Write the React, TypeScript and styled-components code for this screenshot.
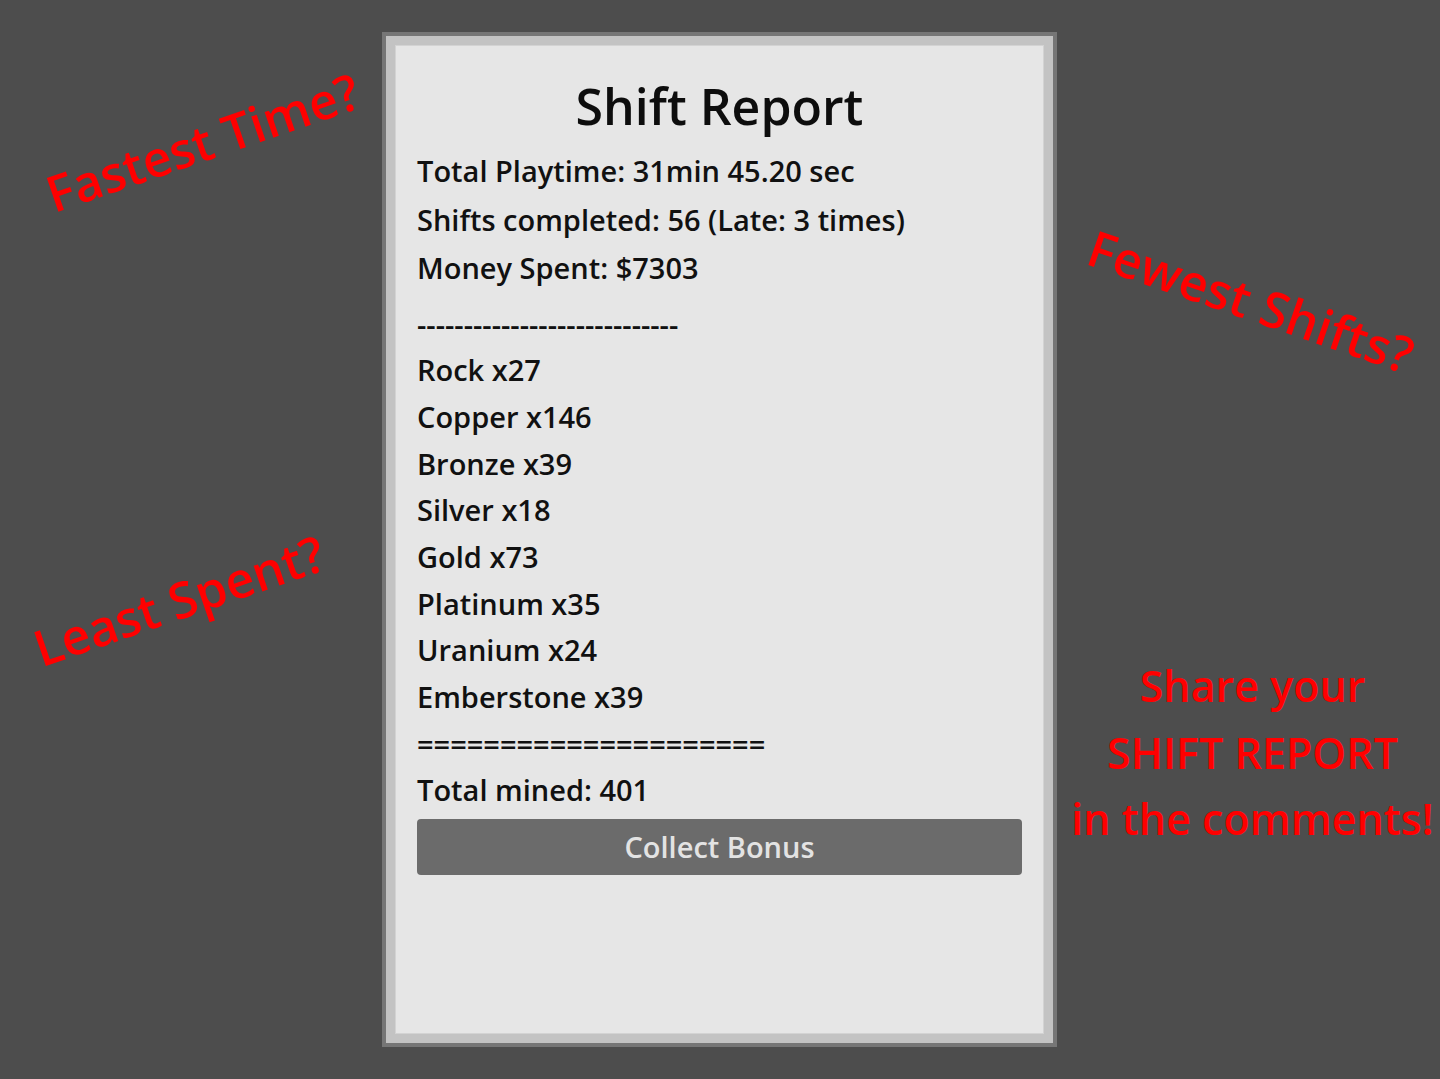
import styled, { createGlobalStyle } from 'styled-components';

const GlobalStyle = createGlobalStyle`
  html, body {
    margin: 0;
    padding: 0;
    background: #4d4d4d;
  }
  body {
    font-family: 'Open Sans', 'Noto Sans', sans-serif;
    font-weight: 600;
  }
`;

const Page = styled.div`
  display: flex;
  height: 1079px;
  overflow: hidden;
  background: #4d4d4d;
`;

const SideColumn = styled.div<{ width?: number }>`
  display: flex;
  flex-direction: column;
  align-items: center;
  ${({ width }) => (width ? `width: ${width}px; flex: none;` : 'flex: 1;')}
`;

const Caption = styled.div<{ top: number; shift?: number; angle: number }>`
  margin-top: ${({ top }) => top}px;
  color: #ff0000;
  font-size: 50px;
  line-height: 66px;
  white-space: nowrap;
  transform: translateX(${({ shift }) => shift || 0}px) rotate(${({ angle }) => angle}deg);
`;

const Callout = styled.div<{ top: number; shift?: number }>`
  margin-top: ${({ top }) => top}px;
  color: #ff0000;
  font-size: 43px;
  line-height: 66.5px;
  text-align: center;
  white-space: nowrap;
  transform: translateX(${({ shift }) => shift || 0}px);
`;

const Frame = styled.div`
  box-sizing: border-box;
  flex: none;
  width: 675px;
  height: 1015px;
  margin-top: 32px;
  border: 4px solid #767676;
  background: #c3c3c3;
  padding: 9px;
`;

const Sheet = styled.div`
  box-sizing: border-box;
  height: 100%;
  background: #e6e6e6;
  border: 1px solid #d3d3d3;
  padding: 25px 21px 0;
  color: #111;
  display: flex;
  flex-direction: column;
`;

const Title = styled.h1`
  margin: 0 0 5px;
  font-size: 50px;
  font-weight: 600;
  line-height: 71px;
  text-align: center;
  color: #0d0d0d;
`;

const Line = styled.div<{ tall?: boolean }>`
  font-size: 29px;
  line-height: ${({ tall }) => (tall ? '48.5px' : '46.67px')};
  white-space: nowrap;
`;

const Rule = styled(Line)`
  margin-top: 8px;
`;

const BonusButton = styled.button`
  margin-top: 5px;
  height: 56px;
  border: none;
  border-radius: 4px;
  background: #6b6b6b;
  color: #e3e3e3;
  font-family: inherit;
  font-weight: 600;
  font-size: 29px;
  cursor: pointer;
  padding: 0;
`;

const ores: [string, number][] = [
  ['Rock', 27],
  ['Copper', 146],
  ['Bronze', 39],
  ['Silver', 18],
  ['Gold', 73],
  ['Platinum', 35],
  ['Uranium', 24],
  ['Emberstone', 39],
];

export default function App() {
  const total = ores.reduce((sum, [, n]) => sum + n, 0);

  return (
    <>
      <GlobalStyle />
      <Page>
        <SideColumn width={382}>
          <Caption top={109} shift={12} angle={-19}>
            Fastest Time?
          </Caption>
          <Caption top={392} shift={-12} angle={-19}>
            Least Spent?
          </Caption>
        </SideColumn>

        <Frame>
          <Sheet>
            <Title>Shift Report</Title>
            <Line tall>Total Playtime: 31min 45.20 sec</Line>
            <Line tall>Shifts completed: 56 (Late: 3 times)</Line>
            <Line tall>Money Spent: $7303</Line>
            <Rule>----------------------------</Rule>
            {ores.map(([name, count]) => (
              <Line key={name}>
                {name} x{count}
              </Line>
            ))}
            <Line>=====================</Line>
            <Line>Total mined: {total}</Line>
            <BonusButton>Collect Bonus</BonusButton>
          </Sheet>
        </Frame>

        <SideColumn>
          <Caption top={268} shift={3} angle={19}>
            Fewest Shifts?
          </Caption>
          <Callout top={319} shift={4}>
            Share your
            <br />
            SHIFT REPORT
            <br />
            in the comments!
          </Callout>
        </SideColumn>
      </Page>
    </>
  );
}
